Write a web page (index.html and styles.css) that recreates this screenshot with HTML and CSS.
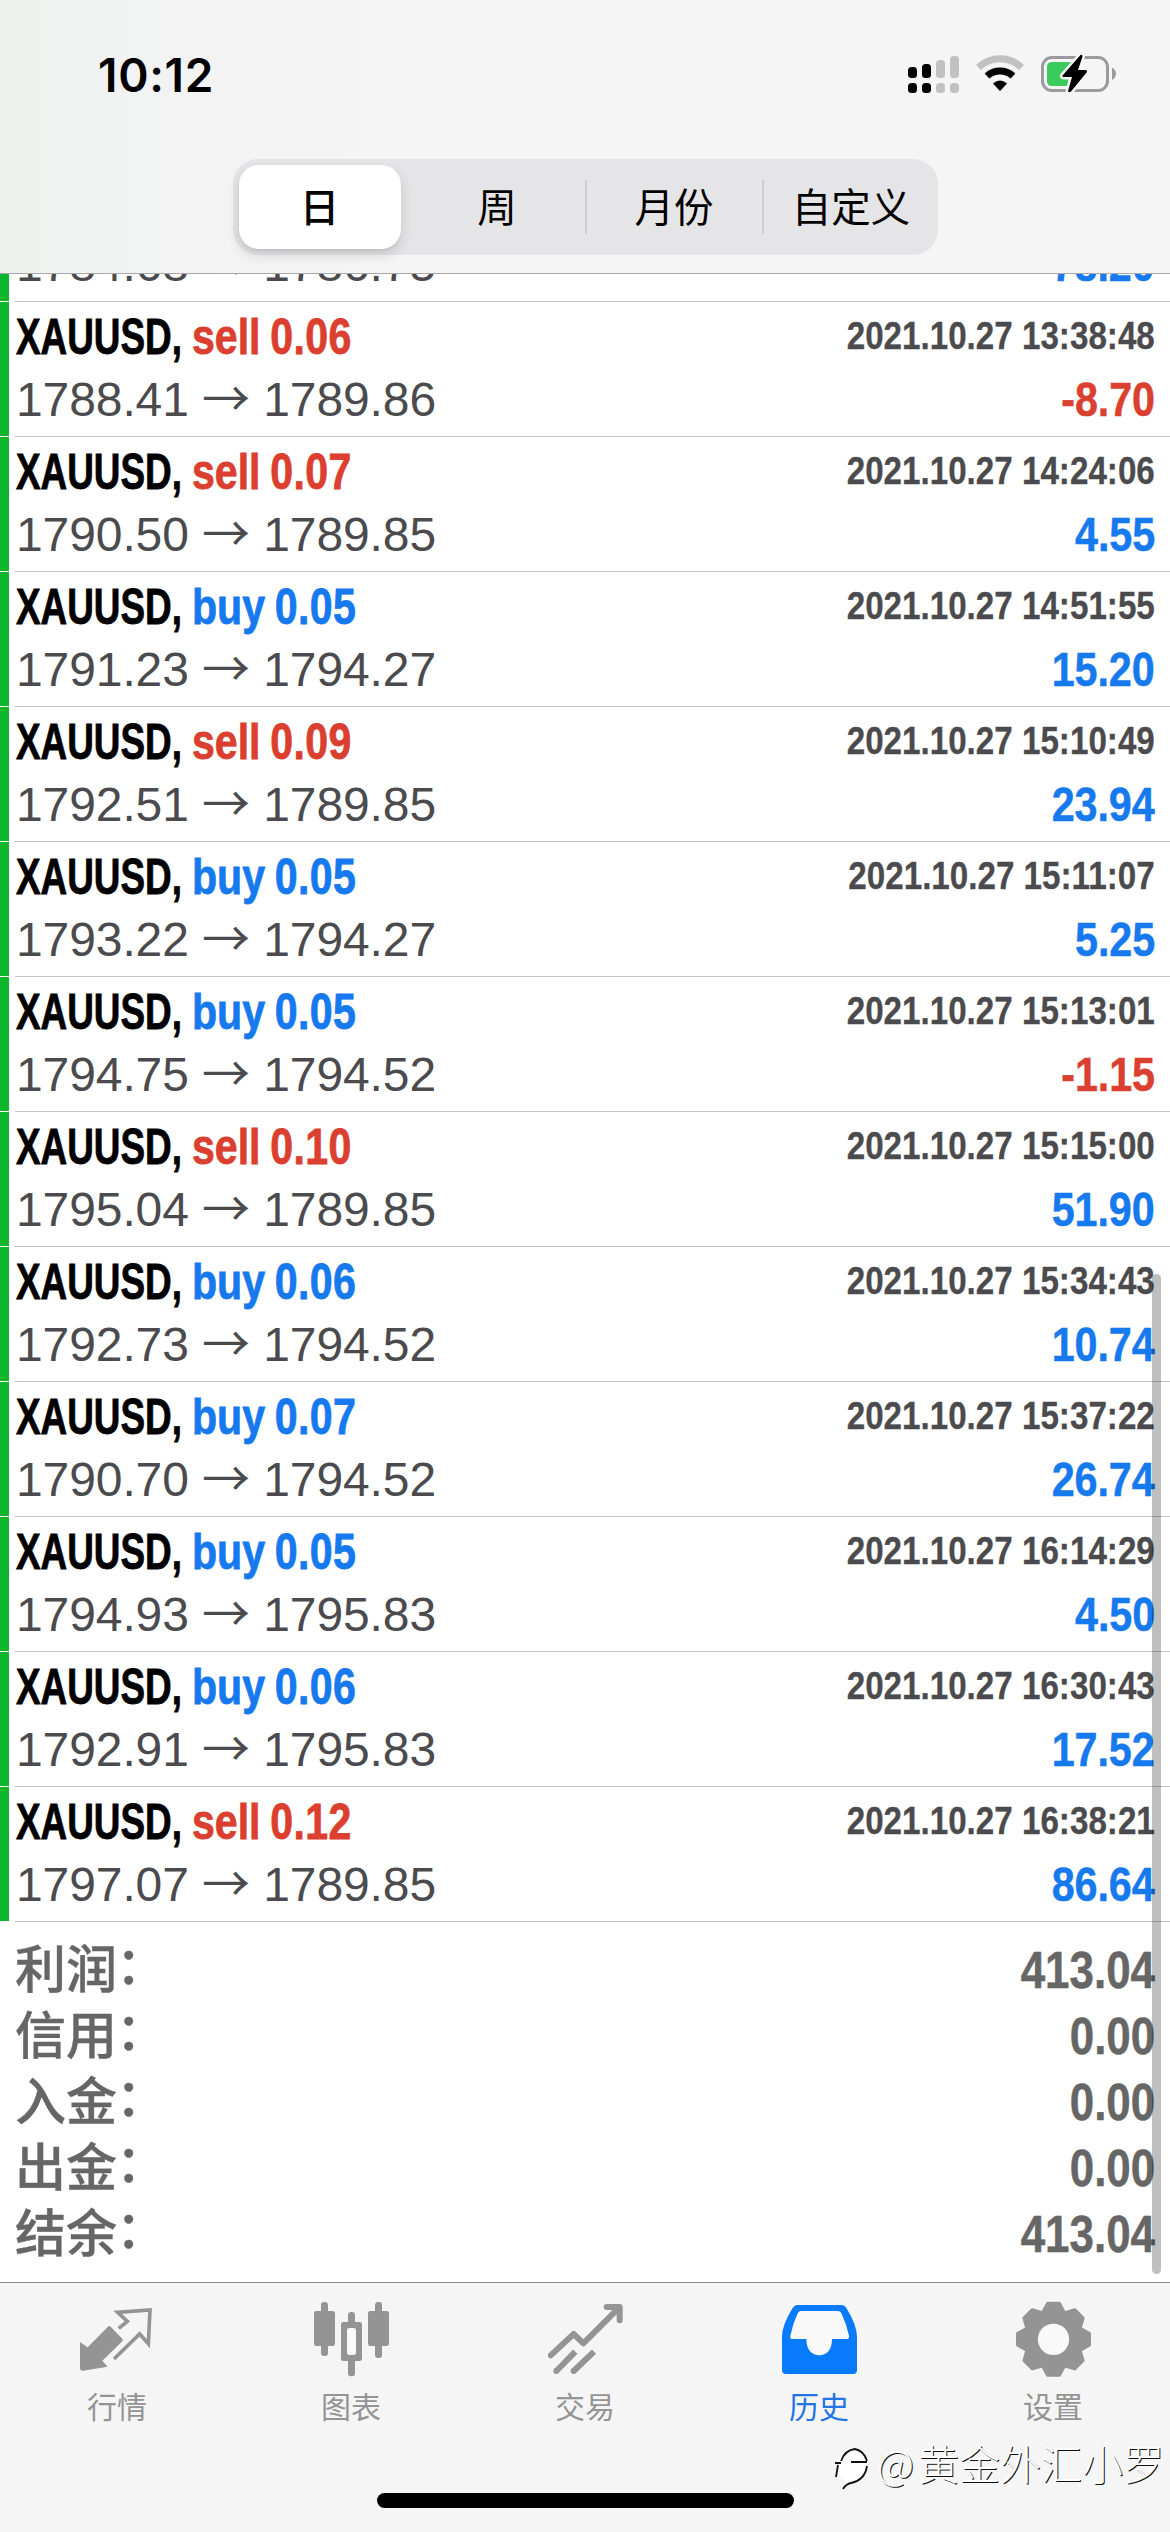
FILE: index.html
```html
<!DOCTYPE html>
<html lang="zh-CN">
<head>
<meta charset="utf-8">
<title>历史</title>
<link rel="stylesheet" href="styles.css">
</head>
<body>
<div class="screen">
  <header class="header">
    <div class="status">
      <span class="clock">10:12</span>
      <svg class="status-icons" viewBox="0 0 216 44" width="216" height="44">
        <g fill="#000"><rect x="7" y="15" width="9" height="11" rx="3.5"/><rect x="21" y="12" width="9" height="14" rx="3.5"/><rect x="7" y="31" width="9" height="10" rx="3.5"/><rect x="21" y="31" width="9" height="10" rx="3.5"/></g>
        <g fill="#c1c1c1"><rect x="35" y="8" width="9" height="18" rx="3.5"/><rect x="49" y="4" width="9" height="22" rx="3.5"/><rect x="35" y="31" width="9" height="10" rx="3.5"/><rect x="49" y="31" width="9" height="10" rx="3.5"/></g>
        <path d="M77.500 15.500 A31 31 0 0 1 120.500 15.500" fill="none" stroke="#c1c1c1" stroke-width="7"/>
        <path d="M86 24 A19.500 19.500 0 0 1 112 24" fill="none" stroke="#000" stroke-width="7"/>
        <path d="M92 31.500 Q99 25.500 106 31.500 L99.800 38.300 Q99 39 98.200 38.300Z" fill="#000"/>
        <rect x="141.500" y="5.500" width="65" height="33" rx="9.500" fill="none" stroke="#9b9a9e" stroke-width="3"/>
        <path d="M211 15.500 Q215 18 215 21.700 T211 28Z" fill="#9b9a9e"/>
        <path d="M151 10 H174 L168 34 H151 Q146 34 146 29 V15 Q146 10 151 10Z" fill="#3acb5b"/>
        <path d="M179.500 3 L161.500 23.500 Q161 25 162.500 25 H171 L167 39 Q167.500 41 170 39.500 L186 20 Q186.500 18 184.500 18 H177 L181.500 4.500 Q181.500 2 179.500 3Z" fill="#000" stroke="#f5f5f5" stroke-width="5" paint-order="stroke"/>
      </svg>
    </div>
    <nav class="segments">
      <span class="segment selected">日</span>
      <span class="segment">周</span>
      <span class="segment ruled">月份</span>
      <span class="segment ruled">自定义</span>
    </nav>
  </header>

  <main class="history">
    <div class="deals">
      <section class="deal"><div class="deal-top"><div class="order"><b>XAUUSD,</b><span class="buy">buy <i>0.05</i></span></div><time>2021.10.27 13:05:11</time></div><div class="deal-bottom"><div>1784.68 <span class="arrow">→</span> 1786.75</div><div class="amount gain">78.20</div></div></section>
      <section class="deal"><div class="deal-top"><div class="order"><b>XAUUSD,</b><span class="sell">sell <i>0.06</i></span></div><time>2021.10.27 13:38:48</time></div><div class="deal-bottom"><div>1788.41 <span class="arrow">→</span> 1789.86</div><div class="amount loss">-8.70</div></div></section>
      <section class="deal"><div class="deal-top"><div class="order"><b>XAUUSD,</b><span class="sell">sell <i>0.07</i></span></div><time>2021.10.27 14:24:06</time></div><div class="deal-bottom"><div>1790.50 <span class="arrow">→</span> 1789.85</div><div class="amount gain">4.55</div></div></section>
      <section class="deal"><div class="deal-top"><div class="order"><b>XAUUSD,</b><span class="buy">buy <i>0.05</i></span></div><time>2021.10.27 14:51:55</time></div><div class="deal-bottom"><div>1791.23 <span class="arrow">→</span> 1794.27</div><div class="amount gain">15.20</div></div></section>
      <section class="deal"><div class="deal-top"><div class="order"><b>XAUUSD,</b><span class="sell">sell <i>0.09</i></span></div><time>2021.10.27 15:10:49</time></div><div class="deal-bottom"><div>1792.51 <span class="arrow">→</span> 1789.85</div><div class="amount gain">23.94</div></div></section>
      <section class="deal"><div class="deal-top"><div class="order"><b>XAUUSD,</b><span class="buy">buy <i>0.05</i></span></div><time>2021.10.27 15:11:07</time></div><div class="deal-bottom"><div>1793.22 <span class="arrow">→</span> 1794.27</div><div class="amount gain">5.25</div></div></section>
      <section class="deal"><div class="deal-top"><div class="order"><b>XAUUSD,</b><span class="buy">buy <i>0.05</i></span></div><time>2021.10.27 15:13:01</time></div><div class="deal-bottom"><div>1794.75 <span class="arrow">→</span> 1794.52</div><div class="amount loss">-1.15</div></div></section>
      <section class="deal"><div class="deal-top"><div class="order"><b>XAUUSD,</b><span class="sell">sell <i>0.10</i></span></div><time>2021.10.27 15:15:00</time></div><div class="deal-bottom"><div>1795.04 <span class="arrow">→</span> 1789.85</div><div class="amount gain">51.90</div></div></section>
      <section class="deal"><div class="deal-top"><div class="order"><b>XAUUSD,</b><span class="buy">buy <i>0.06</i></span></div><time>2021.10.27 15:34:43</time></div><div class="deal-bottom"><div>1792.73 <span class="arrow">→</span> 1794.52</div><div class="amount gain">10.74</div></div></section>
      <section class="deal"><div class="deal-top"><div class="order"><b>XAUUSD,</b><span class="buy">buy <i>0.07</i></span></div><time>2021.10.27 15:37:22</time></div><div class="deal-bottom"><div>1790.70 <span class="arrow">→</span> 1794.52</div><div class="amount gain">26.74</div></div></section>
      <section class="deal"><div class="deal-top"><div class="order"><b>XAUUSD,</b><span class="buy">buy <i>0.05</i></span></div><time>2021.10.27 16:14:29</time></div><div class="deal-bottom"><div>1794.93 <span class="arrow">→</span> 1795.83</div><div class="amount gain">4.50</div></div></section>
      <section class="deal"><div class="deal-top"><div class="order"><b>XAUUSD,</b><span class="buy">buy <i>0.06</i></span></div><time>2021.10.27 16:30:43</time></div><div class="deal-bottom"><div>1792.91 <span class="arrow">→</span> 1795.83</div><div class="amount gain">17.52</div></div></section>
      <section class="deal"><div class="deal-top"><div class="order"><b>XAUUSD,</b><span class="sell">sell <i>0.12</i></span></div><time>2021.10.27 16:38:21</time></div><div class="deal-bottom"><div>1797.07 <span class="arrow">→</span> 1789.85</div><div class="amount gain">86.64</div></div></section>
    </div>
    <dl class="totals">
      <div class="total"><dt>利润<span class="colon">：</span></dt><dd>413.04</dd></div>
      <div class="total"><dt>信用<span class="colon">：</span></dt><dd>0.00</dd></div>
      <div class="total"><dt>入金<span class="colon">：</span></dt><dd>0.00</dd></div>
      <div class="total"><dt>出金<span class="colon">：</span></dt><dd>0.00</dd></div>
      <div class="total"><dt>结余<span class="colon">：</span></dt><dd>413.04</dd></div>
    </dl>
    <div class="scrollbar"></div>
  </main>

  <footer class="tabbar">
    <nav class="tabs">
      <a class="tab">
        <svg viewBox="90 90 225 225" width="75" height="75">
          <path d="M90 216 L113 232 L174 170 Q178 166 182 170 L217 206 Q220 210 217 214 L157 272 L173 290 L99 302 Q90 303 90 294Z" fill="currentColor"/>
          <path d="M206 175 L232 154 L203 127 L300 120 L295 221 L269 192 L192 267" fill="none" stroke="currentColor" stroke-width="11"/>
        </svg>
        <span>行情</span>
      </a>
      <a class="tab">
        <svg viewBox="789 90 225 225" width="75" height="75" overflow="visible">
          <g fill="currentColor"><rect x="789" y="123" width="63" height="105" rx="7"/><rect x="810" y="96" width="21" height="162" rx="9"/><rect x="951" y="123" width="63" height="105" rx="7"/><rect x="972" y="96" width="21" height="168" rx="9"/><rect x="870" y="156" width="63" height="117" rx="7"/><rect x="891" y="126" width="21" height="193" rx="9"/></g>
          <rect x="888" y="174" width="27" height="81" rx="7" fill="#fafafa"/>
        </svg>
        <span>图表</span>
      </a>
      <a class="tab">
        <svg viewBox="142 90 225 225" width="75" height="75">
          <path d="M150 256 L219 192 L248 220 L356 112 M318 111 H357 V151" fill="none" stroke="currentColor" stroke-width="18" stroke-linecap="round" stroke-linejoin="round"/>
          <path d="M224 245 L167 303 M280 245 L219 303" fill="none" stroke="currentColor" stroke-width="18"/>
          <circle cx="167" cy="303" r="9" fill="currentColor"/><circle cx="219" cy="303" r="9" fill="currentColor"/>
        </svg>
        <span>交易</span>
      </a>
      <a class="tab active">
        <svg viewBox="843 90 225 225" width="75" height="75">
          <path d="M890 105 H1021 Q1031 105 1036 114 Q1068 165 1068 201 V300 Q1068 312 1056 312 H855 Q843 312 843 300 V201 Q843 165 875 114 Q880 105 890 105Z" fill="#077bfb"/>
          <path d="M901 123 H1010 Q1018 123 1021 130 Q1036 160 1044 197 Q1046 207 1036 207 H993 C993 240 977 256 955 256 S916 240 916 207 H876 Q865 207 868 197 Q876 160 890 130 Q893 123 901 123Z" fill="#f9f9f9"/>
        </svg>
        <span>历史</span>
      </a>
      <a class="tab">
        <svg viewBox="-112.500 -118 225 225" width="75" height="75" overflow="visible">
          <defs><path id="tooth" d="M-33 -78 L-17 -107 H17 L33 -78Z" stroke-width="11" stroke-linejoin="round"/></defs>
          <g fill="currentColor" stroke="currentColor"><circle r="86"/><use href="#tooth"/><use href="#tooth" transform="rotate(45)"/><use href="#tooth" transform="rotate(90)"/><use href="#tooth" transform="rotate(135)"/><use href="#tooth" transform="rotate(180)"/><use href="#tooth" transform="rotate(225)"/><use href="#tooth" transform="rotate(270)"/><use href="#tooth" transform="rotate(315)"/></g>
          <circle r="47" fill="#f9f9f9"/>
        </svg>
        <span>设置</span>
      </a>
    </nav>
    <div class="home-indicator"></div>
  </footer>

  <div class="watermark">
    <svg viewBox="0 0 40 50" width="40" height="50">
      <path d="M4 16 Q8 4 20 5 Q32 6 35 17 L35 24 Q34 36 20 39 L10 46 L13 38 L4 30Z" fill="#fff"/>
      <path d="M2 19 H8 M5 21 L3 33 M8 17 Q12 6 22 5 Q31 7 34 17 M18 18 H34 M34 22 Q32 36 18 39 Q13 40 10 45" fill="none" stroke="#111" stroke-width="1.800"/>
    </svg>
    <span class="at">@</span><span>黄金外汇小罗</span>
  </div>
</div>
</body>
</html>
```

FILE: styles.css
```css
* { box-sizing: border-box; }

body {
  margin: 0;
  background: #fff;
  font-family: "Liberation Sans", "Noto Sans CJK SC", sans-serif;
}

.screen {
  position: relative;
  display: flex;
  flex-direction: column;
  width: 1170px;
  height: 2532px;
  overflow: hidden;
}

/* Header */
.header {
  flex: none;
  display: flex;
  flex-direction: column;
  align-items: center;
  height: 274px;
  border-bottom: 1px solid #a9a9ab;
  background: linear-gradient(90deg, #eef0ed 0, #f1f2f2 90px, #f3f3f4 220px, #f5f5f5 400px, #f5f5f6 100%);
}

.status {
  display: flex;
  justify-content: space-between;
  align-self: stretch;
  height: 159px;
  padding: 52px 53px 0 98px;
}

.clock {
  font: 600 46px/46px Inter, sans-serif;
  letter-spacing: .7px;
  color: #000;
}

.segments {
  display: flex;
  width: 705px;
  height: 96px;
  padding: 6px;
  border-radius: 25px;
  background: #e5e5e7;
}

.segment {
  display: flex;
  align-items: center;
  justify-content: center;
  flex: none;
  width: 177px;
  height: 84px;
  font: 400 39.5px/80px "Noto Sans CJK SC", sans-serif;
  padding: 0 0 5px 2px;
  color: #000;
}

.segment.selected {
  width: 162px;
  margin-right: 7px;
  padding-left: 0;
  border-radius: 20px;
  background: #fff;
  box-shadow: 0 6px 14px rgba(0, 0, 0, .13), 0 2px 3px rgba(0, 0, 0, .06);
  font-weight: 500;
}

.segment.ruled {
  background: linear-gradient(#cdcdd0, #cdcdd0) 0 50% / 2px 54px no-repeat;
}

/* Deal list */
.history {
  position: relative;
  flex: none;
  height: 2008px;
  overflow: hidden;
}

.deals {
  display: flex;
  flex-direction: column;
  justify-content: flex-end;
  height: 1648px;
}

.deal {
  flex: none;
  height: 135px;
  padding: 1px 15px 0 16px;
  color: #4b4b4e;
  background:
    linear-gradient(#c4c4c5, #c4c4c5) 15px 134px / 1155px 1px no-repeat,
    linear-gradient(#0cb52c, #0cb52c) 0 0 / 9px 134px no-repeat;
}

.deal-top,
.deal-bottom {
  display: flex;
  justify-content: space-between;
  white-space: pre;
}

.order {
  display: flex;
  font-weight: 700;
  font-size: 49.5px;
  line-height: 68px;
  -webkit-text-stroke: .8px currentColor;
}

.order b {
  width: 176px;
  color: #000;
  transform: scaleX(.745);
  transform-origin: 0 0;
}

.order span {
  transform: scaleX(.83);
  transform-origin: 0 0;
  word-spacing: -2px;
}

.order i {
  font-style: normal;
  letter-spacing: .4px;
}

.sell, .loss { color: #da3f2f; }
.buy, .gain { color: #1679ee; }

time {
  font-weight: 700;
  font-size: 39.5px;
  line-height: 65px;
  transform: scaleX(.84);
  transform-origin: 100% 0;
  -webkit-text-stroke: .3px currentColor;
}

.deal-bottom {
  font-size: 48px;
  line-height: 58px;
  letter-spacing: -.1px;
}

.arrow {
  font-family: "Noto Sans CJK SC", sans-serif;
  line-height: 0;
}

.amount {
  font-weight: 700;
  transform: scaleX(.86);
  transform-origin: 100% 0;
  -webkit-text-stroke: .5px currentColor;
}

/* Totals */
.totals {
  margin: 0;
  padding: 15px 15px 0 15px;
  color: #666;
}

.total {
  display: flex;
  justify-content: space-between;
  height: 66px;
}

.total dt {
  font: 500 51px/59px "Noto Sans CJK SC", sans-serif;
  -webkit-text-stroke: .4px currentColor;
}

.total dd {
  margin: 0;
  font-weight: 700;
  font-size: 52px;
  line-height: 66px;
  transform: scaleX(.845);
  transform-origin: 100% 0;
  -webkit-text-stroke: .5px currentColor;
}

.colon {
  position: relative;
  top: -4px;
  left: -1px;
}

.scrollbar {
  position: absolute;
  top: 1000px;
  right: 9px;
  width: 9px;
  height: 1000px;
  border-radius: 5px;
  background: rgba(0, 0, 0, .25);
}

/* Tab bar */
.tabbar {
  display: flex;
  flex-direction: column;
  justify-content: space-between;
  align-items: center;
  height: 250px;
  padding: 17px 0 24px;
  border-top: 1px solid #8d8d8d;
  background: #f5f5f5;
}

.tabs {
  display: flex;
  width: 1170px;
}

.tab {
  flex: 1;
  display: flex;
  flex-direction: column;
  align-items: center;
  gap: 10px;
  color: #949494;
  font: 400 30px/40px "Noto Sans CJK SC", sans-serif;
}

.tab.active { color: #2374e6; }

.home-indicator {
  width: 417px;
  height: 15px;
  border-radius: 8px;
  background: #000;
}

.watermark {
  position: absolute;
  left: 833px;
  top: 2444px;
  display: flex;
  align-items: flex-start;
  color: #fff;
  font: 300 41px/37px "Noto Sans CJK SC", sans-serif;
  text-shadow: 1px 1px 0 #111;
}

.watermark .at {
  width: 45px;
  text-align: center;
}
```
